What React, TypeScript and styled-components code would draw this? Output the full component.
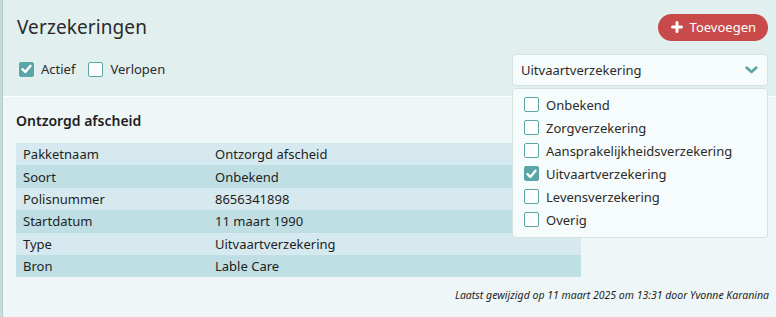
import React from "react";
import styled, { createGlobalStyle } from "styled-components";

const GlobalStyle = createGlobalStyle`
  html, body {
    margin: 0;
    padding: 0;
    background: #e1efee;
    font-family: "Noto Sans", "Open Sans", sans-serif;
    color: #222;
  }
  * { box-sizing: border-box; }
`;

const Page = styled.div`
  width: 776px;
  height: 317px;
  display: flex;
  overflow: hidden;
`;

const SideStrip = styled.div`
  width: 3px;
  background: #c5dcdc;
  border-right: 1px solid #b4cccc;
`;

const Main = styled.div`
  flex: 1;
  display: flex;
  flex-direction: column;
`;

const Header = styled.div`
  height: 97px;
  padding: 13px 8px 0 14px;
  display: flex;
  flex-direction: column;
  border-bottom: 1px solid #ffffff;
`;

const TopRow = styled.div`
  display: flex;
  align-items: center;
  justify-content: space-between;
  height: 28px;
`;

const Title = styled.h1`
  margin: 0;
  font-size: 19px;
  font-weight: 400;
  color: #2a2a2a;
  letter-spacing: 0.1px;
`;

const AddButton = styled.button`
  height: 27px;
  padding: 0 12px 0 13px;
  border: none;
  border-radius: 14px;
  background: #c84a4a;
  color: #fff;
  font-family: inherit;
  font-size: 13px;
  display: flex;
  align-items: center;
  gap: 7px;
`;

const FilterRow = styled.div`
  display: flex;
  align-items: flex-start;
  justify-content: space-between;
  margin-top: 13px;
`;

const Checks = styled.div`
  display: flex;
  gap: 13px;
  padding-left: 2px;
  margin-top: 6px;
`;

const CheckLabel = styled.label`
  display: flex;
  align-items: center;
  gap: 7px;
  font-size: 13px;
  color: #2a2a2a;
`;

const Box = styled.span<{ $checked?: boolean }>`
  width: 15px;
  height: 15px;
  border: 1.5px solid #5aa6a6;
  border-radius: 2px;
  background: ${(p) => (p.$checked ? "#5aa6a6" : "#fff")};
  display: flex;
  align-items: center;
  justify-content: center;
`;

const SelectWrap = styled.div`
  position: relative;
  width: 256px;
`;

const SelectBox = styled.div`
  height: 32px;
  background: #f6fbfb;
  border: 1px solid #d5e2e2;
  border-radius: 3px;
  display: flex;
  align-items: center;
  justify-content: space-between;
  padding: 0 9px 0 8px;
  font-size: 13px;
  color: #2a2a2a;
`;

const Menu = styled.div`
  position: absolute;
  top: 34px;
  left: 0;
  width: 256px;
  background: #f6fbfb;
  border: 1px solid #d5e2e2;
  border-radius: 3px;
  padding: 4px 0 6px 11px;
  display: flex;
  flex-direction: column;
  z-index: 2;
`;

const MenuItem = styled.label`
  height: 23px;
  display: flex;
  align-items: center;
  gap: 7px;
  font-size: 13px;
  color: #2a2a2a;
`;

const Panel = styled.div`
  flex: 1;
  background: #eff6f8;
  padding: 14px 7px 0 13px;
  display: flex;
  flex-direction: column;
`;

const PanelTitle = styled.h2`
  margin: 0 0 13px 0;
  font-size: 14px;
  font-weight: 600;
  color: #1e1e1e;
`;

const Table = styled.div`
  width: 565px;
  display: flex;
  flex-direction: column;
`;

const Row = styled.div<{ $dark?: boolean }>`
  height: 22.4px;
  display: grid;
  grid-template-columns: 192px 1fr;
  align-items: center;
  padding-left: 7px;
  background: ${(p) => (p.$dark ? "#bfdfe5" : "#d5e9ee")};
  font-size: 13px;
  color: #1e1e1e;
`;

const Footer = styled.div`
  margin-top: 11px;
  text-align: right;
  font-size: 10.5px;
  font-style: italic;
  color: #1e1e1e;
`;

const Tick = () => (
  <svg width="11" height="10" viewBox="0 0 11 10">
    <path d="M1.5 5.2 L4.3 8 L9.5 1.8" stroke="#fff" strokeWidth="2.4" fill="none" strokeLinecap="round" strokeLinejoin="round" />
  </svg>
);

const Check = ({ checked }: { checked?: boolean }) => (
  <Box $checked={checked}>{checked && <Tick />}</Box>
);

const options = [
  "Onbekend",
  "Zorgverzekering",
  "Aansprakelijkheidsverzekering",
  "Uitvaartverzekering",
  "Levensverzekering",
  "Overig",
];

const details: [string, string][] = [
  ["Pakketnaam", "Ontzorgd afscheid"],
  ["Soort", "Onbekend"],
  ["Polisnummer", "8656341898"],
  ["Startdatum", "11 maart 1990"],
  ["Type", "Uitvaartverzekering"],
  ["Bron", "Lable Care"],
];

export default function App() {
  return (
    <Page>
      <GlobalStyle />
      <SideStrip />
      <Main>
        <Header>
          <TopRow>
            <Title>Verzekeringen</Title>
            <AddButton>
              <svg width="12" height="12" viewBox="0 0 12 12">
                <path d="M6 1.5 V10.5 M1.5 6 H10.5" stroke="#fff" strokeWidth="3" strokeLinecap="round" />
              </svg>
              Toevoegen
            </AddButton>
          </TopRow>
          <FilterRow>
            <Checks>
              <CheckLabel>
                <Check checked />
                Actief
              </CheckLabel>
              <CheckLabel>
                <Check />
                Verlopen
              </CheckLabel>
            </Checks>
            <SelectWrap>
              <SelectBox>
                Uitvaartverzekering
                <svg width="13" height="8" viewBox="0 0 13 8">
                  <path d="M1.8 1.8 L6.5 6 L11.2 1.8" stroke="#5aa6a6" strokeWidth="2.8" fill="none" strokeLinecap="round" strokeLinejoin="round" />
                </svg>
              </SelectBox>
              <Menu>
                {options.map((o) => (
                  <MenuItem key={o}>
                    <Check checked={o === "Uitvaartverzekering"} />
                    {o}
                  </MenuItem>
                ))}
              </Menu>
            </SelectWrap>
          </FilterRow>
        </Header>
        <Panel>
          <PanelTitle>Ontzorgd afscheid</PanelTitle>
          <Table>
            {details.map(([k, v], i) => (
              <Row key={k} $dark={i % 2 === 1}>
                <span>{k}</span>
                <span>{v}</span>
              </Row>
            ))}
          </Table>
          <Footer>Laatst gewijzigd op 11 maart 2025 om 13:31 door Yvonne Karanina</Footer>
        </Panel>
      </Main>
    </Page>
  );
}
